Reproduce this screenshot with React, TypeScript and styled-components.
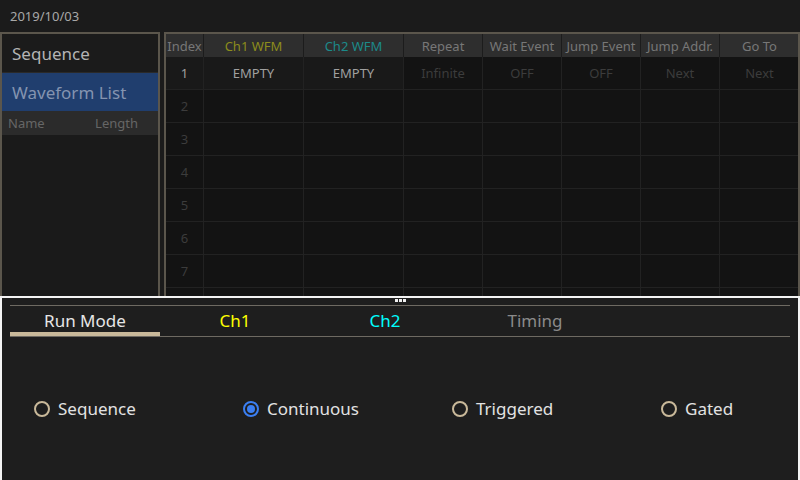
import styled, { createGlobalStyle } from "styled-components";

const GlobalStyle = createGlobalStyle`
  html, body {
    margin: 0;
    padding: 0;
    background: #1b1b1b;
    font-family: "Noto Sans", "Open Sans", sans-serif;
  }
`;

const Screen = styled.div`
  width: 800px;
  height: 480px;
  display: flex;
  flex-direction: column;
  background: #1b1b1b;
  overflow: hidden;
`;

const TopBar = styled.div`
  height: 32px;
  display: flex;
  align-items: center;
  padding-left: 10px;
  font-size: 13px;
  color: #a8a8a8;
`;

const Main = styled.div`
  height: 264px;
  display: flex;
  gap: 4px;
`;

const SidePanel = styled.div`
  width: 160px;
  box-sizing: border-box;
  border: 2px solid #5b564c;
  border-bottom: none;
  display: flex;
  flex-direction: column;
  background: #1a1a1a;
`;

const SideTitle = styled.div<{ $active?: boolean }>`
  height: 38px;
  display: flex;
  align-items: center;
  padding-left: 10px;
  font-size: 17px;
  color: ${({ $active }) => ($active ? "#8494b0" : "#b4b4b4")};
  background: ${({ $active }) => ($active ? "#203e6e" : "#1b1b1b")};
  border-bottom: ${({ $active }) => ($active ? "none" : "1px solid #2a2a2a")};
`;

const ListHeader = styled.div`
  height: 24px;
  display: flex;
  justify-content: space-between;
  align-items: center;
  padding: 0 20px 0 6px;
  background: #2b2b2b;
  font-size: 13px;
  color: #666;
`;

const TablePanel = styled.div`
  flex: 1;
  box-sizing: border-box;
  border: 2px solid #5b564c;
  border-bottom: none;
  background: #131313;
  overflow: hidden;
`;

const Table = styled.div`
  display: grid;
  grid-template-columns: 38px 100px 100px 79px 79px 79px 79px 80px;
`;

const HeadCell = styled.div<{ $color?: string }>`
  height: 23px;
  box-sizing: border-box;
  display: flex;
  align-items: center;
  justify-content: center;
  background: #2e2e2e;
  border-right: 1px solid #1c1c1c;
  font-size: 13px;
  white-space: nowrap;
  color: ${({ $color }) => $color || "#777"};
`;

const Cell = styled.div<{ $bright?: boolean; $lit?: boolean }>`
  height: 33px;
  box-sizing: border-box;
  display: flex;
  align-items: center;
  justify-content: center;
  border-right: 1px solid #222;
  border-bottom: 1px solid #222;
  font-size: 13px;
  background: ${({ $lit }) => ($lit ? "#191919" : "#131313")};
  color: ${({ $bright }) => ($bright ? "#a0a0a0" : "#3c3c3c")};
`;

const Bottom = styled.div`
  flex: 1;
  box-sizing: border-box;
  border: 2px solid #f4f4f4;
  border-bottom: none;
  background: #1e1e1e;
  display: flex;
  flex-direction: column;
  padding: 0 8px;
`;

const Handle = styled.div`
  height: 5px;
  display: flex;
  justify-content: center;
  gap: 1px;
  padding-top: 1px;
  & span {
    width: 3px;
    height: 3px;
    background: #f0f0f0;
  }
`;

const TabBar = styled.div`
  display: flex;
  border-top: 1px solid #6e6a62;
  border-bottom: 1px solid #6e6a62;
  margin-top: 1px;
`;

const Tab = styled.div<{ $color: string; $active?: boolean }>`
  width: 150px;
  height: 30px;
  box-sizing: border-box;
  display: flex;
  align-items: center;
  justify-content: center;
  padding-top: 2px;
  font-size: 17px;
  color: ${({ $color }) => $color};
  border-bottom: 4px solid ${({ $active }) => ($active ? "#c9b99a" : "transparent")};
`;

const RadioRow = styled.div`
  display: flex;
  padding: 60px 0 0 24px;
`;

const RadioItem = styled.label`
  flex: 0 0 209px;
  display: flex;
  align-items: center;
  gap: 8px;
  font-size: 17px;
  color: #e2e2e2;
`;

const RadioDot = styled.span<{ $checked?: boolean }>`
  width: 16px;
  height: 16px;
  box-sizing: border-box;
  border-radius: 50%;
  border: 2px solid ${({ $checked }) => ($checked ? "#3b7ff2" : "#c9b99a")};
  display: flex;
  align-items: center;
  justify-content: center;
  &::after {
    content: "";
    width: 8px;
    height: 8px;
    border-radius: 50%;
    background: ${({ $checked }) => ($checked ? "#3b7ff2" : "transparent")};
  }
`;

const columns = [
  { label: "Index" },
  { label: "Ch1 WFM", color: "#8c8c1c" },
  { label: "Ch2 WFM", color: "#1c8a8a" },
  { label: "Repeat" },
  { label: "Wait Event" },
  { label: "Jump Event" },
  { label: "Jump Addr." },
  { label: "Go To" },
];

const firstRow = ["1", "EMPTY", "EMPTY", "Infinite", "OFF", "OFF", "Next", "Next"];

export default function App() {
  const rows = [2, 3, 4, 5, 6, 7, 8];
  return (
    <Screen>
      <GlobalStyle />
      <TopBar>2019/10/03</TopBar>
      <Main>
        <SidePanel>
          <SideTitle>Sequence</SideTitle>
          <SideTitle $active>Waveform List</SideTitle>
          <ListHeader>
            <span>Name</span>
            <span>Length</span>
          </ListHeader>
        </SidePanel>
        <TablePanel>
          <Table>
            {columns.map((c) => (
              <HeadCell key={c.label} $color={c.color}>
                {c.label}
              </HeadCell>
            ))}
            {firstRow.map((v, i) => (
              <Cell key={"r1" + i} $bright={i < 3} $lit={i < 3}>
                {v}
              </Cell>
            ))}
            {rows.map((r) =>
              columns.map((c, i) => (
                <Cell key={r + c.label}>{i === 0 && r < 8 ? r : ""}</Cell>
              ))
            )}
          </Table>
        </TablePanel>
      </Main>
      <Bottom>
        <Handle>
          <span />
          <span />
          <span />
        </Handle>
        <TabBar>
          <Tab $color="#e6e6e6" $active>
            Run Mode
          </Tab>
          <Tab $color="#ffff00">Ch1</Tab>
          <Tab $color="#00ffff">Ch2</Tab>
          <Tab $color="#8a8a8a">Timing</Tab>
        </TabBar>
        <RadioRow>
          <RadioItem>
            <RadioDot />
            Sequence
          </RadioItem>
          <RadioItem>
            <RadioDot $checked />
            Continuous
          </RadioItem>
          <RadioItem>
            <RadioDot />
            Triggered
          </RadioItem>
          <RadioItem>
            <RadioDot />
            Gated
          </RadioItem>
        </RadioRow>
      </Bottom>
    </Screen>
  );
}
